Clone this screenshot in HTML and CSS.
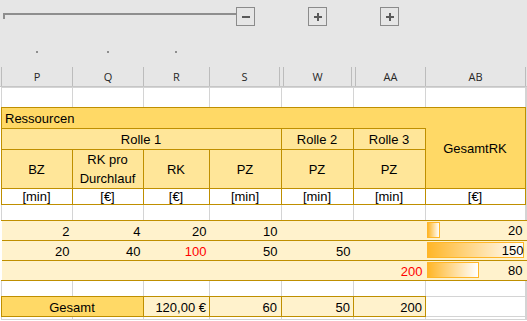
FILE: index.html
```html
<!DOCTYPE html>
<html>
<head>
<meta charset="UTF-8">
<link rel="stylesheet" href="styles.css">
</head>
<body>
<div class="outline">
  <div class="outline-row">
    <span class="bracket"></span>
    <span class="btn"><svg width="17" height="17" viewBox="0 0 17 17"><rect x="5" y="8" width="8" height="2"/></svg></span>
    <span class="btn"><svg width="17" height="17" viewBox="0 0 17 17"><rect x="5" y="8" width="8" height="2"/><rect x="8" y="5" width="2" height="8"/></svg></span>
    <span class="btn"><svg width="17" height="17" viewBox="0 0 17 17"><rect x="5" y="8" width="8" height="2"/><rect x="8" y="5" width="2" height="8"/></svg></span>
  </div>
  <div class="levels">
    <span></span>
    <span><i class="dot"></i></span>
    <span><i class="dot"></i></span>
    <span><i class="dot"></i></span>
  </div>
</div>

<div class="colhead">
  <span class="col-o"></span>
  <span>P</span>
  <span>Q</span>
  <span>R</span>
  <span>S</span>
  <span class="hidden-col"></span>
  <span>W</span>
  <span class="hidden-col"></span>
  <span>AA</span>
  <span>AB</span>
  <span class="col-end"></span>
</div>

<table class="sheet">
  <colgroup>
    <col class="w-p"><col class="w-q"><col class="w-r"><col class="w-s">
    <col class="w-w"><col class="w-aa"><col class="w-ab"><col>
  </colgroup>
  <tr class="blank">
    <td></td><td></td><td></td><td></td><td></td><td></td><td></td><td></td>
  </tr>
  <tr class="ress">
    <td class="h-dark left ress-cell" colspan="6">Ressourcen</td>
    <td class="h-dark total" rowspan="3">GesamtRK</td>
    <td></td>
  </tr>
  <tr class="roles">
    <td class="h-light" colspan="4">Rolle 1</td>
    <td class="h-light">Rolle 2</td>
    <td class="h-light">Rolle 3</td>
    <td></td>
  </tr>
  <tr class="fields">
    <td class="h-light">BZ</td>
    <td class="h-light">RK pro<br>Durchlauf</td>
    <td class="h-light">RK</td>
    <td class="h-light">PZ</td>
    <td class="h-light">PZ</td>
    <td class="h-light">PZ</td>
    <td></td>
  </tr>
  <tr class="units">
    <td class="unit">[min]</td>
    <td class="unit">[€]</td>
    <td class="unit">[€]</td>
    <td class="unit">[min]</td>
    <td class="unit">[min]</td>
    <td class="unit">[min]</td>
    <td class="unit">[€]</td>
    <td></td>
  </tr>
  <tr class="gap">
    <td></td><td></td><td></td><td></td><td></td><td></td><td></td><td></td>
  </tr>
  <tr class="data">
    <td>2</td><td>4</td><td>20</td><td class="s">10</td><td></td><td></td>
    <td class="bar"><div class="dbar"><i style="width:13px"></i><span>20</span></div></td>
    <td></td>
  </tr>
  <tr class="data">
    <td>20</td><td>40</td><td class="red">100</td><td class="s">50</td><td>50</td><td></td>
    <td class="bar"><div class="dbar"><i style="width:97px"></i><span>150</span></div></td>
    <td></td>
  </tr>
  <tr class="data">
    <td></td><td></td><td></td><td class="s"></td><td></td><td class="red">200</td>
    <td class="bar"><div class="dbar"><i style="width:52px"></i><span>80</span></div></td>
    <td></td>
  </tr>
  <tr class="gap">
    <td></td><td></td><td></td><td></td><td></td><td></td><td></td><td></td>
  </tr>
  <tr class="sum">
    <td class="h-dark" colspan="2">Gesamt</td>
    <td class="val">120,00 €</td>
    <td class="val s">60</td>
    <td class="val">50</td>
    <td class="val">200</td>
    <td></td>
    <td></td>
  </tr>
  <tr class="tail">
    <td></td><td></td><td></td><td></td><td></td><td></td><td></td><td></td>
  </tr>
</table>
</body>
</html>
```

FILE: styles.css
```css
:root {
  --chrome: #e6e6e6;
  --chrome-line: #bcbcbc;
  --outline: #8e8e8e;
  --grid: #d4d4d4;
  --gold: #bf8f00;
  --gold-dark: #ffd966;
  --gold-light: #ffe699;
  --gold-pale: #fff2cc;
  --bar: #ffb628;
  --red: #ff0000;
}

* {
  box-sizing: border-box;
  margin: 0;
  padding: 0;
}

body {
  width: 527px;
  height: 321px;
  overflow: hidden;
  background: #fff;
  font-family: "Liberation Sans", Arial, sans-serif;
  font-size: 13px;
  color: #000;
}

/* outline (grouping) area */
.outline {
  height: 67px;
  background: var(--chrome);
}

.outline-row {
  display: flex;
  align-items: flex-start;
  height: 44px;
  padding: 7px 0 0 3px;
}

.bracket {
  width: 233px;
  height: 6px;
  margin-top: 6px;
  border-top: 2px solid var(--outline);
  border-left: 2px solid var(--outline);
}

.btn {
  width: 19px;
  height: 19px;
  border: 1px solid #8b8b8b;
  display: flex;
  fill: #5a5a5a;
}

.btn + .btn {
  margin-left: 53px;
}

.levels {
  display: grid;
  grid-template-columns: 1px 71px 71px 66px;
  padding-top: 7px;
}

.levels span {
  display: flex;
  justify-content: center;
}

.dot {
  width: 2px;
  height: 2px;
  background: var(--outline);
}

/* column letters */
.colhead {
  display: grid;
  grid-template-columns: 2px 71px 71px 66px 70px 4px 68px 4px 70px 100px 1fr;
  height: 20px;
  background: var(--chrome);
  border-bottom: 1px solid #c6c6c6;
  font-family: "Open Sans", "Noto Sans", sans-serif;
  font-size: 11px;
  color: #262626;
}

.colhead span {
  display: flex;
  align-items: center;
  justify-content: center;
  border-right: 1px solid var(--chrome-line);
}

.colhead .col-end {
  border-right: none;
}

/* sheet */
.sheet {
  border-collapse: collapse;
  table-layout: fixed;
  width: 526px;
  margin-left: 1px;
}

.w-p { width: 71px; }
.w-q { width: 71px; }
.w-r { width: 66px; }
.w-s { width: 72px; }
.w-w { width: 72px; }
.w-aa { width: 72px; }
.w-ab { width: 100px; }

.sheet td {
  border: 1px solid var(--grid);
  padding: 0 3px 0 2px;
  white-space: nowrap;
  overflow: hidden;
  text-align: right;
  line-height: 15px;
  vertical-align: bottom;
}

.blank td { height: 20px; }
.ress td { height: 21px; }
.roles td { height: 21px; }
.fields td { height: 38px; }
.units td { height: 16px; }
.gap td { height: 16px; }
.data td { height: 20px; }
.sum td { height: 20px; }
.tail td { height: 3px; }

/* gold wins over gridlines in the collapsed model */
.sheet .h-dark,
.sheet .h-light,
.sheet .unit,
.sheet .val {
  border: 1px double var(--gold);
  text-align: center;
  vertical-align: middle;
}

.h-dark { background: var(--gold-dark); }
.h-light { background: var(--gold-light); }
.val { background: var(--gold-pale); }

.sheet .left {
  text-align: left;
  padding-left: 3px;
}

.sheet .ress-cell {
  border-right-style: hidden;
}

.total {
  padding-bottom: 2px;
}

.fields td {
  line-height: 19px;
}

.units td {
  line-height: 14px;
}

.sheet .unit {
  vertical-align: bottom;
}

.sheet .data td {
  background: var(--gold-pale);
  border-top: 1px double var(--gold);
  border-bottom: 1px double var(--gold);
  border-left: none;
  border-right: none;
  padding-bottom: 1px;
}

.sheet .sum .val {
  text-align: right;
  vertical-align: bottom;
  padding-bottom: 1px;
}

.sheet .sum .h-dark {
  vertical-align: bottom;
  padding-bottom: 1px;
}

.sheet td.s {
  padding-right: 4px;
}

.red {
  color: var(--red);
}

.sheet .data .bar {
  padding: 1px 3px 1px 1px;
  vertical-align: top;
}

.dbar {
  display: grid;
  height: 16px;
  align-items: end;
}

.dbar i,
.dbar span {
  grid-area: 1 / 1;
}

.dbar i {
  height: 16px;
  border: 1px solid var(--bar);
  background: linear-gradient(to right, var(--bar), #fff);
}

.dbar span {
  justify-self: end;
  line-height: 15px;
}
```
